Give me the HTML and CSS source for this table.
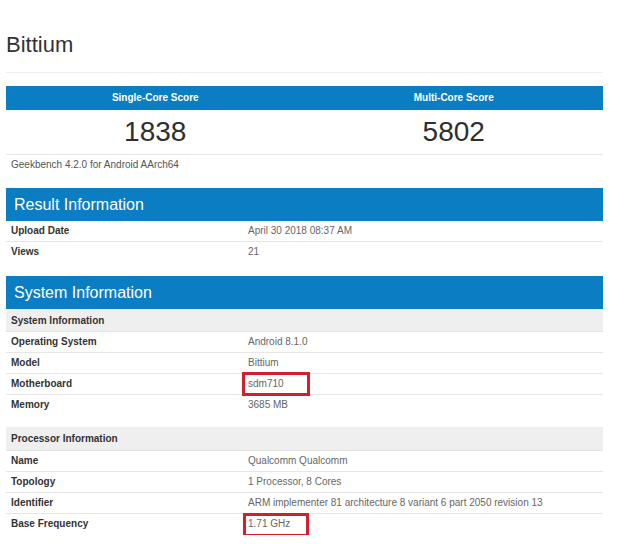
FILE: index.html
```html
<!DOCTYPE html>
<html>
<head>
<meta charset="utf-8">
<link rel="stylesheet" href="styles.css">
</head>
<body>
<div class="page">
  <h1 class="title">Bittium</h1>
  <div class="divider"></div>

  <div class="scores">
    <div class="score-head">
      <div class="score-label">Single-Core Score</div>
      <div class="score-label">Multi-Core Score</div>
    </div>
    <div class="score-vals">
      <div class="score-val">1838</div>
      <div class="score-val">5802</div>
    </div>
  </div>
  <div class="version">Geekbench 4.2.0 for Android AArch64</div>

  <section class="section result">
    <div class="sec-head">Result Information</div>
    <div class="row"><div class="lbl">Upload Date</div><div class="val">April 30 2018 08:37 AM</div></div>
    <div class="row last"><div class="lbl">Views</div><div class="val">21</div></div>
  </section>

  <section class="section system">
    <div class="sec-head">System Information</div>
    <div class="sub-head">System Information</div>
    <div class="row"><div class="lbl">Operating System</div><div class="val">Android 8.1.0</div></div>
    <div class="row"><div class="lbl">Model</div><div class="val">Bittium</div></div>
    <div class="row"><div class="lbl">Motherboard</div><div class="val"><span class="hl">sdm710</span></div></div>
    <div class="row last"><div class="lbl">Memory</div><div class="val">3685 MB</div></div>

    <div class="sub-head proc">Processor Information</div>
    <div class="row"><div class="lbl">Name</div><div class="val">Qualcomm Qualcomm</div></div>
    <div class="row"><div class="lbl">Topology</div><div class="val">1 Processor, 8 Cores</div></div>
    <div class="row"><div class="lbl">Identifier</div><div class="val">ARM implementer 81 architecture 8 variant 6 part 2050 revision 13</div></div>
    <div class="row last"><div class="lbl">Base Frequency</div><div class="val"><span class="hl hl2">1.71 GHz</span></div></div>
  </section>
</div>
</body>
</html>
```

FILE: styles.css
```css
*, *::before, *::after { box-sizing: border-box; }
html, body { margin: 0; padding: 0; background: #ffffff; }
body {
  font-family: "Liberation Sans", Arial, sans-serif;
  color: #333;
}
.page {
  width: 597px;
  margin-left: 6px;
  padding-top: 32px;
}
.title {
  margin: 0;
  font-size: 22px;
  line-height: 26px;
  font-weight: normal;
  color: #333;
}
.divider {
  margin-top: 14px;
  border-top: 1px solid #eeeeee;
}
.scores { margin-top: 13px; }
.score-head {
  display: grid;
  grid-template-columns: 1fr 1fr;
  background: #0b7dc2;
  height: 24px;
}
.score-label {
  color: #fff;
  font-weight: bold;
  font-size: 10px;
  line-height: 24px;
  text-align: center;
}
.score-vals {
  display: grid;
  grid-template-columns: 1fr 1fr;
  height: 45px;
  border-bottom: 1px solid #e6e6e6;
}
.score-val {
  text-align: center;
  font-size: 28px;
  line-height: 44px;
  color: #2e2e2e;
}
.version {
  font-size: 10px;
  line-height: 14px;
  padding: 3px 5px 0;
  color: #555;
}
.section.result { margin-top: 16px; }
.section.system { margin-top: 13px; }
.sec-head {
  background: #0b7dc2;
  color: #fff;
  font-size: 16px;
  height: 33px;
  line-height: 33px;
  padding-left: 8px;
}
.sub-head {
  background: #efefef;
  font-size: 10px;
  font-weight: bold;
  height: 23px;
  line-height: 23px;
  padding-left: 5px;
  color: #333;
  border-bottom: 1px solid #e2e2e2;
}
.sub-head.proc { margin-top: 11px; height: 24px; line-height: 24px; }
.row {
  display: grid;
  grid-template-columns: 237px 1fr;
  padding: 0 5px;
  height: 21px;
  line-height: 20px;
  font-size: 10px;
  border-bottom: 1px solid #e6e6e6;
}
.row.last { border-bottom: none; }
.lbl { font-weight: bold; color: #333; }
.val { color: #666; white-space: nowrap; }
.hl { position: relative; display: inline-block; line-height: 20px; }
.hl::after {
  content: "";
  position: absolute;
  left: -6px;
  top: -2px;
  width: 68px;
  height: 24px;
  border: 3px solid #d11f2e;
}
.hl2::after { left: -5px; top: -1px; width: 66px; }
```
